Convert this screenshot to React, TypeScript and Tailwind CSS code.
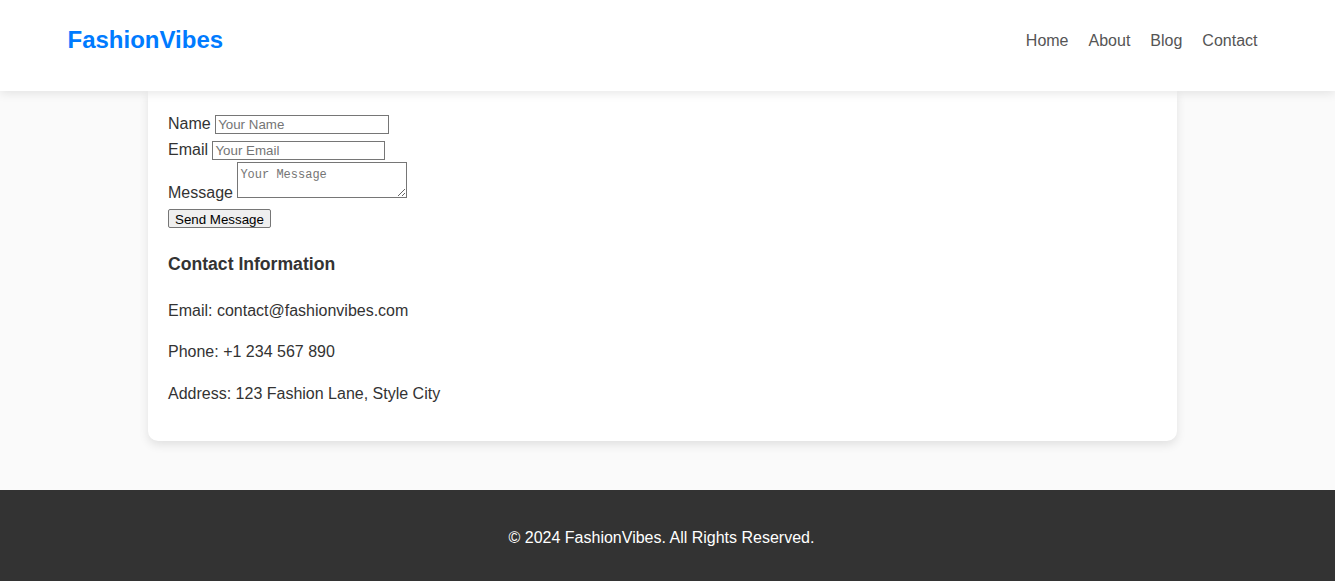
const navLinks = ["Home", "About", "Blog", "Contact"];

const contactInfo = [
  "Email: contact@fashionvibes.com",
  "Phone: +1 234 567 890",
  "Address: 123 Fashion Lane, Style City",
];

const Header = () => {
  return (
    <header className="relative z-10 h-[91px] bg-white shadow-[0_2px_10px_rgba(0,0,0,0.1)]">
      <div className="mx-auto flex h-[81px] max-w-[1200px] items-center justify-between">
        <h1 className="text-[24px] font-bold leading-[1.6] text-[#007bff]">FashionVibes</h1>
        <nav>
          <ul className="flex">
            {navLinks.map((link) => (
              <li key={link} className="mx-[10px]">
                <a href="#" className="text-[16px] text-[#555]">
                  {link}
                </a>
              </li>
            ))}
          </ul>
        </nav>
      </div>
    </header>
  );
};

const ContactForm = () => {
  return (
    <form className="leading-[1.6]">
      <label>Name </label>
      <input
        type="text"
        placeholder="Your Name"
        className="h-[19px] w-[174px] border border-[#767676] px-[2px] py-[1px] align-baseline font-['Liberation_Sans',Arial,sans-serif] text-[13.33px] leading-normal placeholder:text-[#757575]"
      />
      <br />
      <label>Email </label>
      <input
        type="email"
        placeholder="Your Email"
        className="h-[19px] w-[173px] border border-[#767676] px-[2px] py-[1px] align-baseline font-['Liberation_Sans',Arial,sans-serif] text-[13.33px] leading-normal placeholder:text-[#757575]"
      />
      <br />
      <label>Message </label>
      <textarea
        placeholder="Your Message"
        className="h-[36px] w-[170px] resize border border-[#767676] px-[2px] pt-[4px] align-baseline font-['Liberation_Mono',monospace] text-[12px] leading-[16px] placeholder:text-[#757575]"
      />
      <br />
      <button
        type="button"
        className="h-[19px] rounded-[2px] border border-[#767676] bg-[#efefef] px-[6px] align-baseline font-['Liberation_Sans',Arial,sans-serif] text-[13.33px] leading-normal text-black"
      >
        Send Message
      </button>
    </form>
  );
};

export default function App() {
  return (
    <div className="min-h-[581px] bg-[#fafafa] font-['Liberation_Sans',Arial,sans-serif] text-[16px] text-[#333]">
      <Header />
      <main className="pb-[49px]">
        <section className="ml-[148px] w-[1029px] rounded-b-[10px] bg-white px-[20px] pt-[20px] pb-[20px] shadow-[0_4px_10px_rgba(0,0,0,0.1)]">
          <ContactForm />
          <h3 className="mt-[19px] text-[17.6px] font-bold leading-[1.6]">Contact Information</h3>
          <div className="mt-[19px] flex flex-col gap-[16px] pb-[15px] leading-[1.6]">
            {contactInfo.map((line) => (
              <p key={line}>{line}</p>
            ))}
          </div>
        </section>
      </main>
      <footer className="h-[91px] bg-[#333] pt-[35px] pr-[12px] text-center leading-[1.6] text-white">
        <p>© 2024 FashionVibes. All Rights Reserved.</p>
      </footer>
    </div>
  );
}
